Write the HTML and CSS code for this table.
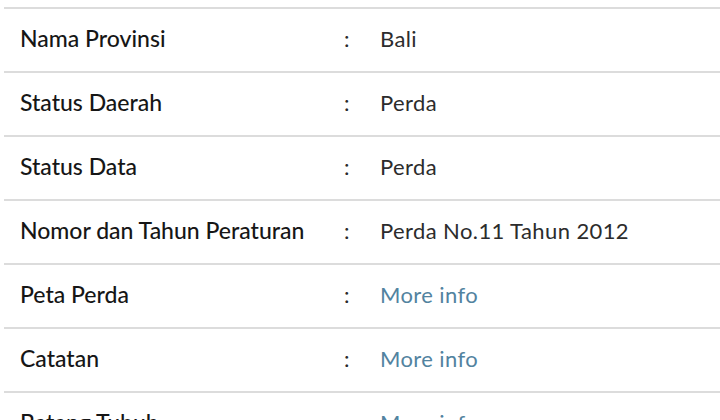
FILE: index.html
```html
<!DOCTYPE html>
<html lang="id">
<head>
<meta charset="utf-8">
<title>Detail Perda</title>
<link rel="stylesheet" href="styles.css">
</head>
<body>
<div class="list">
  <div class="row"><div class="label">Nama Provinsi</div><div class="colon">:</div><div class="value">Bali</div></div>
  <div class="row"><div class="label">Status Daerah</div><div class="colon">:</div><div class="value">Perda</div></div>
  <div class="row"><div class="label">Status Data</div><div class="colon">:</div><div class="value">Perda</div></div>
  <div class="row"><div class="label">Nomor dan Tahun Peraturan</div><div class="colon">:</div><div class="value">Perda No.11 Tahun 2012</div></div>
  <div class="row"><div class="label">Peta Perda</div><div class="colon">:</div><div class="value"><a class="link" href="#">More info</a></div></div>
  <div class="row"><div class="label">Catatan</div><div class="colon">:</div><div class="value"><a class="link" href="#">More info</a></div></div>
  <div class="row"><div class="label">Batang Tubuh</div><div class="colon">:</div><div class="value"><a class="link" href="#">More info</a></div></div>
</div>
</body>
</html>
```
FILE: styles.css
```css
html, body {
  margin: 0;
  padding: 0;
  background: #ffffff;
  overflow: hidden;
}
body {
  font-family: Lato, "Noto Sans", sans-serif;
  color: #141414;
}
.list {
  padding-top: 7px;
  margin-left: 4px;
}
.row {
  display: grid;
  grid-template-columns: 324px 36px 1fr;
  align-items: center;
  height: 58px;
  padding: 0 0 4px 16px;
  border-top: 2px solid #dcdcdc;
}
.label {
  font-size: 23px;
  font-weight: 500;
  color: #161616;
  white-space: nowrap;
}
.colon {
  font-size: 22px;
  font-weight: 400;
  color: #2a2a2a;
}
.value {
  font-size: 22px;
  font-weight: 400;
  color: #2c2c2c;
  letter-spacing: 0.4px;
  white-space: nowrap;
}
.link {
  color: #52839f;
  text-decoration: none;
}
```
